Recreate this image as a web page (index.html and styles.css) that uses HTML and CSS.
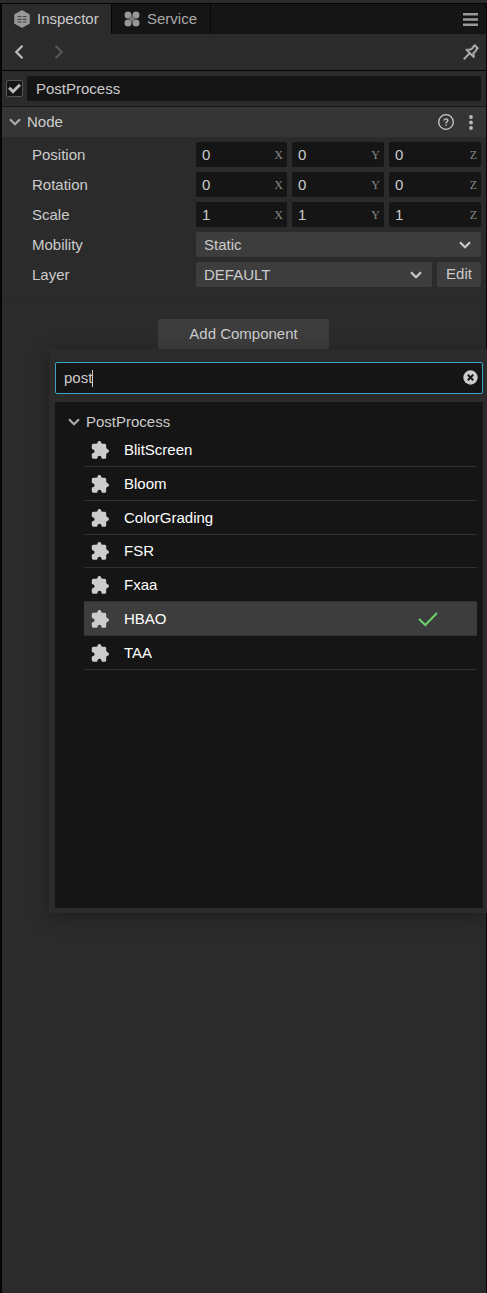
FILE: index.html
```html
<!DOCTYPE html>
<html lang="en">
<head>
<meta charset="utf-8">
<title>Inspector</title>
<link rel="stylesheet" href="styles.css">
</head>
<body>
<svg class="defs" width="0" height="0">
  <symbol id="chev" viewBox="0 0 12 8"><path d="M1 1.200 6 6.200 11 1.200" fill="none" stroke="currentColor" stroke-width="2.200"/></symbol>
  <symbol id="puzzle" viewBox="0 0 18 18"><path fill="currentColor" d="M2.300 2.700H5.200Q6.400 2.700 6.600 1.400 7 0 8.400 0T10.200 1.400Q10.400 2.700 11.600 2.700H13.800Q15.200 2.700 15.200 4.200V6.600Q15.300 7.800 16.600 8.200 18 8.600 18 10T16.600 11.800Q15.300 12 15.200 13.300V16.200Q15.200 17.700 13.700 17.700H10.900Q10.600 17.700 10.600 16.800 10.300 14.800 8.500 14.800T6.400 16.800Q6.300 17.700 5.900 17.700H2.400Q.8 17.700.8 16.100V12.800Q.8 12.300 1.800 12.200 3.600 11.900 3.600 10.200T1.800 8.200Q.8 8.100.8 7.500V4.200Q.8 2.700 2.300 2.700z"/></symbol>
</svg>
<div class="panel">
  <div class="tabs">
    <div class="tab active">
      <svg width="16" height="18" viewBox="0 0 16 18"><path d="M8 1 15 4.800v8.400L8 17 1 13.200V4.800z" fill="#999" stroke="#999" stroke-width="1.500" stroke-linejoin="round"/><path d="M3.500 6.500h4M8.800 6.500h3.700M3.500 9.300h4M8.800 9.300h3.700M3.500 12h4M8.800 12h3.700" stroke="#444" stroke-width="1.200"/></svg>
      <span>Inspector</span>
    </div>
    <div class="tab">
      <svg width="16" height="16" viewBox="0 0 16 16" fill="#999"><path d="M4 .5A3.500 3.500 0 0 1 7.500 4v3.500H4a3.500 3.500 0 0 1 0-7zM12 .5a3.500 3.500 0 0 1 0 7H8.500V4A3.500 3.500 0 0 1 12 .5zM4 8.500h3.500V12A3.500 3.500 0 1 1 4 8.500zM8.500 8.500H12A3.500 3.500 0 1 1 8.500 12z"/><path d="M5.500 5.500h5v5h-5z" fill="#777"/></svg>
      <span>Service</span>
    </div>
    <svg class="menu" width="15" height="13" viewBox="0 0 15 13"><path d="M0 1.200h15M0 6.500h15M0 11.800h15" stroke="#999" stroke-width="2.400"/></svg>
  </div>
  <div class="toolbar">
    <svg width="10" height="14" viewBox="0 0 10 14" fill="none" stroke="#bbb" stroke-width="2.300"><path d="M8.500 .8 2.300 7l6.200 6.200"/></svg>
    <svg class="next" width="10" height="14" viewBox="0 0 10 14" fill="none" stroke="#555" stroke-width="2.300"><path d="M1.500 .8 7.700 7l-6.200 6.200"/></svg>
    <svg class="pin" width="16" height="16" viewBox="0 0 16 16" fill="none" stroke="#aaa" stroke-width="2" stroke-linejoin="round"><path d="M10.300 2.800 11.800 1.300l2.900 2.900-1.600 1.500-.5 1.600-2.100 1.800.2 3.900L3.500 5.800l3.900-.2 2.300-1.600zM6.400 9.500.8 15.200"/></svg>
  </div>
  <div class="name-row">
    <span class="check"><svg width="13" height="11" viewBox="0 0 13 11"><path d="M1.200 4.800 5 8.600 12 1.700" fill="none" stroke="#bbb" stroke-width="3"/></svg></span>
    <div class="field name">PostProcess</div>
  </div>
  <div class="section">
    <svg class="chev-sm" width="12" height="8"><use href="#chev"/></svg>
    <span>Node</span>
    <svg class="help" width="16" height="16" viewBox="0 0 16 16"><circle cx="8" cy="8" r="7.300" fill="none" stroke="#ccc" stroke-width="1.300"/><path d="M6.200 6.600C6.200 4.200 9.900 4.300 9.900 6.500 9.900 7.800 8 7.900 8 9.500M8 10.400v1.400" fill="none" stroke="#ccc" stroke-width="1.300"/></svg>
    <svg class="dots" width="4" height="15" viewBox="0 0 4 15" fill="#bbb"><circle cx="2" cy="2" r="1.900"/><circle cx="2" cy="7.500" r="1.900"/><circle cx="2" cy="13" r="1.900"/></svg>
  </div>
  <div class="props">
    <div class="prop"><label>Position</label><div class="vec"><div class="field">0<i>X</i></div><div class="field">0<i>Y</i></div><div class="field">0<i>Z</i></div></div></div>
    <div class="prop"><label>Rotation</label><div class="vec"><div class="field">0<i>X</i></div><div class="field">0<i>Y</i></div><div class="field">0<i>Z</i></div></div></div>
    <div class="prop"><label>Scale</label><div class="vec"><div class="field">1<i>X</i></div><div class="field">1<i>Y</i></div><div class="field">1<i>Z</i></div></div></div>
    <div class="prop"><label>Mobility</label><div class="select">Static<svg width="12" height="8"><use href="#chev"/></svg></div></div>
    <div class="prop"><label>Layer</label><div class="select">DEFAULT<svg width="12" height="8"><use href="#chev"/></svg></div><div class="edit">Edit</div></div>
  </div>
  <div class="add">Add Component</div>
</div>
<div class="popup">
  <div class="search"><span>post</span><b class="caret"></b>
    <svg width="15" height="15" viewBox="0 0 15 15"><circle cx="7.500" cy="7.500" r="7.200" fill="#ccc"/><path d="M4.800 4.800l5.400 5.400M10.200 4.800l-5.400 5.400" stroke="#151515" stroke-width="2"/></svg>
  </div>
  <div class="list">
    <div class="group"><svg width="12" height="8"><use href="#chev"/></svg>PostProcess</div>
    <div class="item"><svg width="18" height="18"><use href="#puzzle"/></svg>BlitScreen</div>
    <div class="item"><svg width="18" height="18"><use href="#puzzle"/></svg>Bloom</div>
    <div class="item"><svg width="18" height="18"><use href="#puzzle"/></svg>ColorGrading</div>
    <div class="item"><svg width="18" height="18"><use href="#puzzle"/></svg>FSR</div>
    <div class="item"><svg width="18" height="18"><use href="#puzzle"/></svg>Fxaa</div>
    <div class="item selected"><svg width="18" height="18"><use href="#puzzle"/></svg>HBAO<svg class="tick" width="20" height="15" viewBox="0 0 20 15"><path d="M1 7l6.300 6L19 1" fill="none" stroke="#69d16c" stroke-width="2"/></svg></div>
    <div class="item"><svg width="18" height="18"><use href="#puzzle"/></svg>TAA</div>
  </div>
</div>
</body>
</html>
```
FILE: styles.css
```css
* { box-sizing: border-box; }
body {
  margin: 0;
  height: 1293px;
  padding-top: 3px;
  overflow: hidden;
  position: relative;
  background: #2b2b2b;
  color: #ccc;
  font: 15px/20px "Liberation Sans", Arial, sans-serif;
}
svg { display: block; flex: none; }
.defs { position: absolute; }
.panel {
  height: 1290px;
  border: solid #050505;
  border-width: 1px 1px 0 2px;
}
.tabs { display: flex; height: 30px; background: #151515; }
.tab {
  display: flex;
  align-items: center;
  width: 99px;
  padding-left: 12px;
  border-right: 1px solid #050505;
  color: #aaa;
}
.tab span { margin-left: 7px; }
.tab.active { width: 110px; background: #2b2b2b; color: #ccc; border-right: 1px solid #050505; }
.menu { margin: 9px 8px 0 auto; }
.toolbar {
  display: flex;
  align-items: center;
  height: 37px;
  padding: 0 7px 1px 12px;
  border-bottom: 1px solid #050505;
}
.next { margin-left: 30px; }
.pin { margin-left: auto; }
.name-row {
  display: flex;
  align-items: center;
  height: 36px;
  padding: 0 5px 0 4px;
  border-bottom: 1px solid #151515;
}
.check {
  display: grid;
  place-items: center;
  width: 17px;
  height: 17px;
  margin-right: 4px;
  border: 1px solid #555;
  border-radius: 2px;
  background: #151515;
}
.field {
  flex: 1;
  display: flex;
  align-items: center;
  height: 25px;
  padding: 0 4px 0 6px;
  border-radius: 2px;
  background: #151515;
}
.name { padding-left: 9px; }
.section {
  display: flex;
  align-items: center;
  height: 30px;
  padding: 0 13px 0 7px;
  background: #353535;
}
.chev-sm, .group svg { color: #aaa; }
.section span { margin-left: 6px; }
.help { margin-left: auto; }
.dots { margin-left: 15px; }
.props { display: grid; gap: 5px; height: 163px; align-content: start; padding: 5px 5px 0 30px; border-bottom: 1px solid #272727; }
.prop { display: flex; align-items: center; height: 25px; }
.prop label { width: 164px; }
.vec { flex: 1; display: grid; grid-template-columns: 91px 92px 92px; gap: 5px; }
.field i { margin-left: auto; color: #888; font: 12px/20px "Liberation Serif", serif; }
.select {
  flex: 1;
  display: flex;
  align-items: center;
  justify-content: space-between;
  height: 25px;
  padding: 0 10px 0 8px;
  border-radius: 2px;
  background: #3d3d3d;
}
.edit {
  width: 44px;
  height: 25px;
  margin-left: 5px;
  border-radius: 2px;
  background: #3d3d3d;
  text-align: center;
  line-height: 24px;
}
.add {
  width: 171px;
  height: 30px;
  margin: 19px 0 0 156px;
  border-radius: 2px;
  background: #3d3d3d;
  text-align: center;
  line-height: 30px;
}
/* Component picker, floating above the panel */
.popup {
  position: absolute;
  left: 49px;
  top: 349px;
  width: 438px;
  height: 564px;
  padding: 13px 4px 5px 6px;
  background: #2b2b2b;
  box-shadow: 0 4px 20px rgba(0, 0, 0, .3);
}
.search {
  display: flex;
  align-items: center;
  height: 32px;
  padding: 0 4px 0 8px;
  border: 1px solid #3ba3c9;
  border-radius: 2px;
  background: #151515;
}
.search svg { margin: 0 0 2px auto; }
.caret { width: 1px; height: 17px; background: #ccc; }
.list { height: 506px; margin-top: 8px; padding: 10px 6px 0 13px; background: #151515; }
.group { display: flex; align-items: center; height: 20px; margin-bottom: 1.2px; }
.group svg { margin-right: 6px; }
.item {
  display: flex;
  align-items: center;
  height: 33.8px;
  margin-left: 16px;
  padding: 1px 0 0 7px;
  border-bottom: 1px solid #303030;
  color: #fff;
}
.item svg { margin-right: 15px; color: #ccc; }
.item.selected { background: #3d3d3d; }
.item .tick { margin: 0 39px 0 auto; }
```
